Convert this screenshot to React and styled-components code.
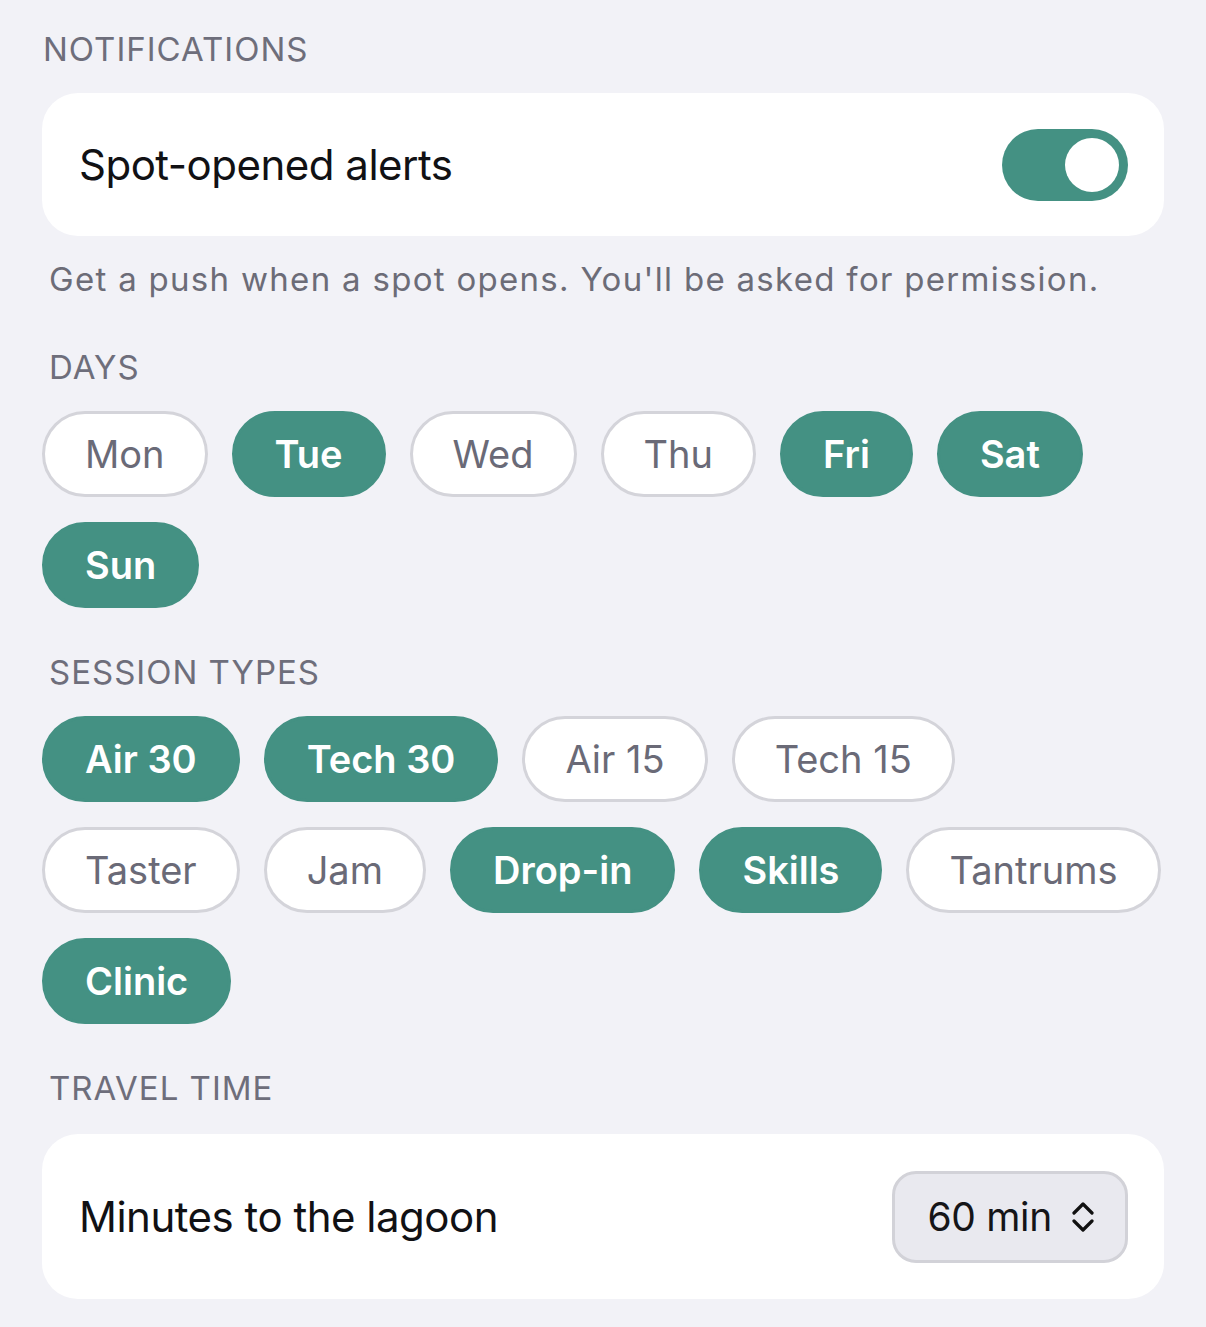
import React, { useState } from 'react'
import styled, { createGlobalStyle } from 'styled-components'

const GlobalStyle = createGlobalStyle`
  * {
    box-sizing: border-box;
  }
  body {
    margin: 0;
    background: #f2f2f7;
    font-family: Inter, 'Liberation Sans', sans-serif;
    -webkit-font-smoothing: antialiased;
  }
`

const Page = styled.div`
  display: flex;
  flex-direction: column;
  padding: 29px 42px 29px 42px;
  min-height: 1327px;
  background: #f2f2f7;
`

const SectionLabel = styled.div`
  font-size: 33px;
  line-height: 41px;
  letter-spacing: 1px;
  color: #6e6e7b;
  text-transform: uppercase;
  padding-left: ${(p) => (p.$outer ? '1px' : '7px')};
  margin-top: ${(p) => p.$top || 0}px;
`

const Card = styled.div`
  display: flex;
  align-items: center;
  justify-content: space-between;
  background: #fff;
  border-radius: 36px;
  height: ${(p) => p.$height}px;
  padding: 0 36px 0 37px;
  margin-top: ${(p) => p.$top || 0}px;
`

const CardLabel = styled.span`
  font-size: 42px;
  letter-spacing: -0.5px;
  color: #111114;
`

const Toggle = styled.button`
  position: relative;
  width: 126px;
  height: 72px;
  border: none;
  border-radius: 36px;
  padding: 0;
  background: ${(p) => (p.$on ? '#449183' : '#d1d1d6')};
  cursor: pointer;

  &::after {
    content: '';
    position: absolute;
    top: 9px;
    left: ${(p) => (p.$on ? '63px' : '9px')};
    width: 54px;
    height: 54px;
    border-radius: 50%;
    background: #fff;
  }
`

const Hint = styled.p`
  margin: 23px 0 0;
  padding-left: 7px;
  font-size: 33px;
  line-height: 40px;
  color: #6c6c77;
  letter-spacing: 1.3px;
`

const ChipWrap = styled.div`
  display: flex;
  flex-wrap: wrap;
  gap: 25px 24px;
  margin-top: 23px;
`

const Chip = styled.button`
  height: 86px;
  padding: 0 40px;
  border-radius: 43px;
  border: 3px solid ${(p) => (p.$on ? '#449183' : '#d4d4da')};
  background: ${(p) => (p.$on ? '#449183' : '#fff')};
  color: ${(p) => (p.$on ? '#fff' : '#6a6a77')};
  font-family: inherit;
  font-size: 38px;
  font-weight: ${(p) => (p.$on ? 600 : 400)};
  white-space: nowrap;
  cursor: pointer;
`

const Select = styled.button`
  display: flex;
  align-items: center;
  gap: 20px;
  height: 92px;
  padding: 0 31px 0 32px;
  border-radius: 24px;
  border: 3px solid #d2d2d8;
  background: #e9e9ef;
  font-family: inherit;
  font-size: 39px;
  letter-spacing: -0.3px;
  color: #151518;
  cursor: pointer;
`

const days = ['Mon', 'Tue', 'Wed', 'Thu', 'Fri', 'Sat', 'Sun']
const sessions = [
  'Air 30',
  'Tech 30',
  'Air 15',
  'Tech 15',
  'Taster',
  'Jam',
  'Drop-in',
  'Skills',
  'Tantrums',
  'Clinic',
]

function UpDown() {
  return (
    <svg width="22" height="30" viewBox="0 0 22 30" fill="none">
      <path
        d="M2 11 L11 2 L20 11 M2 19 L11 28 L20 19"
        stroke="#111"
        strokeWidth="3.2"
        strokeLinecap="round"
        strokeLinejoin="round"
      />
    </svg>
  )
}

export default function App() {
  const [alerts, setAlerts] = useState(true)
  const [pickedDays, setPickedDays] = useState(['Tue', 'Fri', 'Sat', 'Sun'])
  const [pickedTypes, setPickedTypes] = useState([
    'Air 30',
    'Tech 30',
    'Drop-in',
    'Skills',
    'Clinic',
  ])

  const flip = (list, setList, v) =>
    setList(list.includes(v) ? list.filter((x) => x !== v) : [...list, v])

  return (
    <>
      <GlobalStyle />
      <Page>
        <SectionLabel $outer>Notifications</SectionLabel>
        <Card $height={143} $top={23}>
          <CardLabel>Spot-opened alerts</CardLabel>
          <Toggle $on={alerts} onClick={() => setAlerts(!alerts)} />
        </Card>
        <Hint>Get a push when a spot opens. You'll be asked for permission.</Hint>

        <SectionLabel $top={48}>Days</SectionLabel>
        <ChipWrap>
          {days.map((d) => (
            <Chip
              key={d}
              $on={pickedDays.includes(d)}
              onClick={() => flip(pickedDays, setPickedDays, d)}>
              {d}
            </Chip>
          ))}
        </ChipWrap>

        <SectionLabel $top={44}>Session types</SectionLabel>
        <ChipWrap>
          {sessions.map((s) => (
            <Chip
              key={s}
              $on={pickedTypes.includes(s)}
              onClick={() => flip(pickedTypes, setPickedTypes, s)}>
              {s}
            </Chip>
          ))}
        </ChipWrap>

        <SectionLabel $top={44}>Travel time</SectionLabel>
        <Card $height={165} $top={25}>
          <CardLabel>Minutes to the lagoon</CardLabel>
          <Select>
            60 min
            <UpDown />
          </Select>
        </Card>
      </Page>
    </>
  )
}
